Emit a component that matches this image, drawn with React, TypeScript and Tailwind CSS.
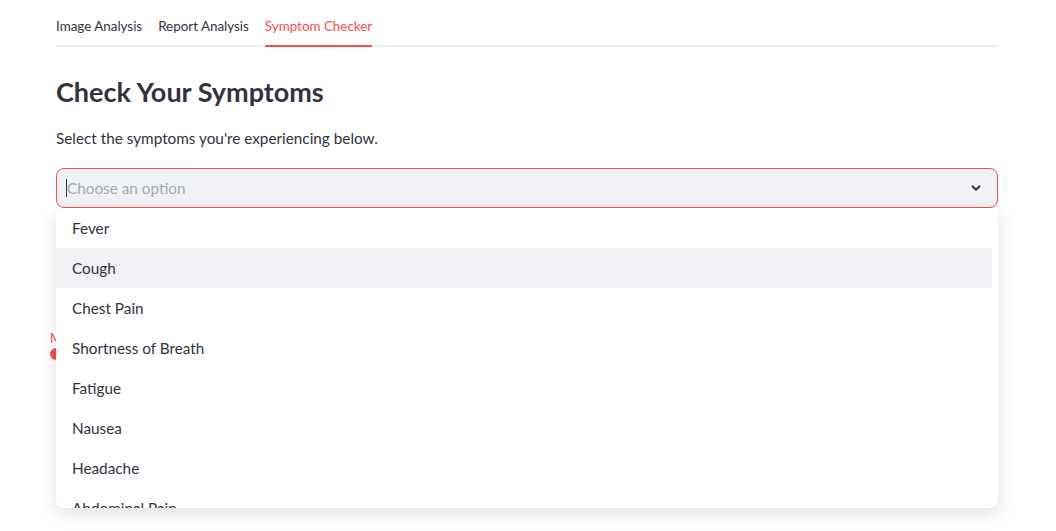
import React from 'react';

const symptoms = [
  'Fever',
  'Cough',
  'Chest Pain',
  'Shortness of Breath',
  'Fatigue',
  'Nausea',
  'Headache',
  'Abdominal Pain',
];

const tabs = ['Image Analysis', 'Report Analysis', 'Symptom Checker'];

const App: React.FC = () => {
  return (
    <div
      className="min-h-[531px] bg-white text-[#31333f]"
      style={{ fontFamily: 'Lato, "Noto Sans", sans-serif' }}
    >
      <div className="px-[56px] pr-[58px]">
        {/* tabs */}
        <div className="flex gap-4 border-b-2 border-[#eff0f2]">
          {tabs.map((t, i) => (
            <div
              key={t}
              className={
                'pt-4 pb-[9px] -mb-[2px] border-b-2 text-[13.4px] leading-5 ' +
                (i === 2 ? 'border-[#ff4b4b] text-[#ff4b4b]' : 'border-transparent text-[#31333f]')
              }
            >
              {t}
            </div>
          ))}
        </div>

        <h3 className="mt-[27px] text-[27px] font-bold leading-[36px] text-[#31333f]">
          Check Your Symptoms
        </h3>
        <p className="mt-[16px] text-[15.3px] leading-6">Select the symptoms you're experiencing below.</p>

        {/* multiselect */}
        <div className="relative mt-[18px]">
          <div className="flex h-10 items-center rounded-lg border border-[#ff4b4b] bg-[#f0f2f6] pl-[9px] pr-[14px]">
            <span className="h-[18px] w-px bg-[#31333f]" />
            <span className="flex-1 text-[15.3px] text-[#a3a8b8]">Choose an option</span>
            <svg width="14" height="14" viewBox="0 0 24 24" fill="none" stroke="#31333f" strokeWidth="3.2" strokeLinecap="round" strokeLinejoin="round">
              <path d="M6 9l6 6 6-6" />
            </svg>
          </div>

          {/* content underneath the menu */}
          <div className="relative mt-[122px] h-[40px]">
            <span className="absolute -left-[6px] top-0 text-[13px] leading-4 text-[#ff4b4b]">Mild</span>
            <span className="absolute -left-[6px] top-[18px] h-3 w-3 rounded-full bg-[#ff4b4b]" />
          </div>

          {/* open dropdown */}
          <div className="absolute left-0 right-0 top-10 h-[300px] overflow-hidden rounded-b-lg rounded-t-sm bg-white shadow-[0_6px_18px_rgba(0,0,0,0.12)]">
            <ul className="pr-[6px]">
              {symptoms.map((s, i) => (
                <li
                  key={s}
                  className={'flex h-10 items-center px-4 text-[15.3px] text-[#31333f] ' + (i === 1 ? 'bg-[#f0f2f6]' : '')}
                >
                  {s}
                </li>
              ))}
            </ul>
          </div>
        </div>
      </div>
    </div>
  );
};

export default App;
